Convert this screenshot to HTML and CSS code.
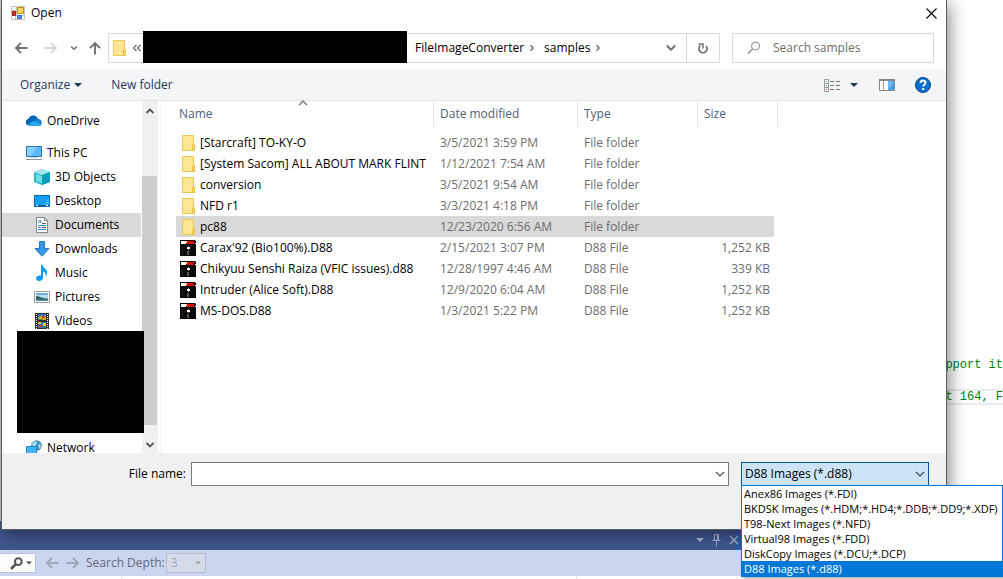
FILE: index.html
```html
<!DOCTYPE html>
<html lang="en">
<head>
<meta charset="utf-8">
<title>Open</title>
<link rel="stylesheet" href="styles.css">
</head>
<body>
<svg class="defs" aria-hidden="true">
  <symbol id="folder" viewBox="0 0 16 16">
    <path d="M2.500.5h11v9h1v6h-12z" fill="#ffe594" stroke="#eec64e"/>
    <path d="M12.500 15.500v-5.500h2v5.500z" fill="#ffe28a" stroke="#e9bd42"/>
  </symbol>
  <symbol id="disk" viewBox="0 0 16 16">
    <path d="M0 0h15l1 1v15H0z" fill="#0a0a0a"/>
    <path d="M1 1h5v3H1z" fill="#fff"/><path d="M6 1h1v2H6z" fill="#ffe040"/>
    <path d="M7 1h7v3H7z" fill="#e81000"/><path d="M9 2h1v1H9zM12 2h1v1h-1z" fill="#8c0800"/>
    <path d="M15 3h1v1h-1z" fill="#fff"/>
    <path d="M7 7h3v2H7z" fill="#fff"/><path d="M8 6h1v1H8zM8 9h1v1H8z" fill="#999"/>
    <path d="M7 11h2v4H7z" fill="#555"/><path d="M2.500 6v9" stroke="#242424" fill="none"/>
  </symbol>
  <symbol id="chev" viewBox="0 0 10 10"><path d="M1.500 3L5 6.500 8.500 3" fill="none" stroke="currentColor" stroke-width="1.800"/></symbol>
  <symbol id="thin" viewBox="0 0 10 10"><path d="M1 3l4 4 4-4" fill="none" stroke="currentColor" stroke-width="1.100"/></symbol>
  <symbol id="tri" viewBox="0 0 8 8"><path d="M0 2h8L4 6z" fill="currentColor"/></symbol>
  <symbol id="arrow" viewBox="0 0 14 12"><path d="M13.500 6H2M7 1L2 6l5 5" fill="none" stroke="currentColor" stroke-width="1.900"/></symbol>
</svg>

<main class="ide">
  <div class="editor" aria-hidden="true">
    <div class="code-line">pport it</div>
    <div class="code-line"></div>
    <div class="code-line current">t 164, F</div>
  </div>
  <section class="tool-window">
    <header class="tool-head">
      <button aria-label="Window position"><svg width="8" height="8"><use href="#tri"/></svg></button>
      <button aria-label="Auto hide"><svg width="9" height="12" viewBox="0 0 9 12"><path d="M2.500 6.500v-6h4v6M5.500 1v5M.5 6.500h8M4.500 7v5" fill="none" stroke="currentColor"/></svg></button>
      <button aria-label="Close panel"><svg width="10" height="10" viewBox="0 0 10 10"><path d="M1 1l8 8M9 1L1 9" stroke="currentColor" stroke-width="1.400"/></svg></button>
    </header>
    <div class="tool-bar">
      <button class="find" aria-label="Search"><svg width="13" height="13" viewBox="0 0 13 13"><circle cx="8.300" cy="4.700" r="3.400" fill="none" stroke="#555" stroke-width="2"/><path d="M6 7l-5 5" stroke="#555" stroke-width="2.600"/></svg><svg class="mini" viewBox="0 0 8 8"><use href="#tri"/></svg></button>
      <button class="step" aria-label="Previous"><svg width="14" height="12"><use href="#arrow"/></svg></button>
      <button class="step next" aria-label="Next"><svg width="14" height="12"><use href="#arrow"/></svg></button>
      <label for="depth">Search Depth:</label>
      <span class="depth-box"><select id="depth" disabled><option>3</option></select><svg class="mini" viewBox="0 0 8 8"><use href="#tri"/></svg></span>
    </div>
    <div class="results"><span></span><span></span></div>
  </section>
</main>

<section class="dialog" role="dialog" aria-labelledby="title">
  <header class="title-bar">
    <svg width="14" height="14" viewBox="0 0 14 14"><path d="M.5.5h13v13H.5z" fill="#fff" stroke="#c2c2c2"/><path d="M.5 4.500h5M4.500 10v4M5.500.5v9h8" stroke="#c2c2c2" fill="none"/><path d="M6.500 1.500h6v6h-6z" fill="#ffd65c" stroke="#c58d08"/><path d="M1.500 5.500h3v4h-3z" fill="#d93a2c" stroke="#a31212"/><path d="M6.500 9.500h4v3h-4z" fill="#5b8df0" stroke="#3668cb"/></svg>
    <h1 id="title">Open</h1>
    <button aria-label="Close"><svg width="11" height="11" viewBox="0 0 11 11"><path d="M.5.5l10 10M10.500.5l-10 10" stroke="#000" stroke-width="1.100"/></svg></button>
  </header>

  <nav class="address-row" aria-label="Location">
    <button class="back" aria-label="Back"><svg width="14" height="12"><use href="#arrow"/></svg></button>
    <button class="forward" aria-label="Forward"><svg width="14" height="12"><use href="#arrow"/></svg></button>
    <button class="recent" aria-label="Recent locations"><svg width="8" height="8"><use href="#chev"/></svg></button>
    <button class="up" aria-label="Up"><svg width="14" height="12"><use href="#arrow"/></svg></button>
    <div class="address">
      <svg class="place" width="16" height="16"><use href="#folder"/></svg>
      <svg class="more" width="8" height="8" viewBox="0 0 8 8"><path d="M3.500 1l-3 3 3 3M7.500 1l-3 3 3 3" fill="none" stroke="#666" stroke-width="1.200"/></svg>
      <span class="hidden-path"></span>
      <a href="#">FileImageConverter</a><svg class="sep" width="8" height="8"><use href="#chev"/></svg>
      <a href="#">samples</a><svg class="sep" width="8" height="8"><use href="#chev"/></svg>
      <button class="history" aria-label="Previous locations"><svg width="12" height="12"><use href="#chev"/></svg></button>
      <button class="refresh" aria-label="Refresh"><svg width="12" height="13" viewBox="0 0 12 13"><path d="M3.300 3.700A4 4 0 1 0 9 4" fill="none" stroke="#707070" stroke-width="1.800"/><path d="M1.500 2H6v4.500" fill="none" stroke="#707070" stroke-width="1.500"/></svg></button>
    </div>
    <div class="search">
      <svg width="14" height="14" viewBox="0 0 14 14"><circle cx="8.500" cy="5" r="4" fill="none" stroke="#85858d"/><path d="M5.500 8L1 12.500" stroke="#85858d" stroke-width="1.200"/></svg>
      <input type="search" placeholder="Search samples" aria-label="Search samples">
    </div>
  </nav>

  <div class="commands">
    <button>Organize <svg width="8" height="8"><use href="#tri"/></svg></button>
    <button>New folder</button>
    <button class="view" aria-label="Change your view"><svg width="17" height="13" viewBox="0 0 17 13"><path d="M.5.500h4v12h-4zM.5 4.500h4M.5 8.500h4" fill="#fff" stroke="#999"/><path d="M2 2h1v1H2z" fill="#3a78c8"/><path d="M2 6h1v1H2z" fill="#3a9ae8"/><path d="M2 10h1v1H2z" fill="#e02020"/><path d="M6 2.500h4M12 2.500h4M6 6.500h4M12 6.500h4M6 10.500h4M12 10.500h4" stroke="#777"/></svg><svg width="8" height="8"><use href="#tri"/></svg></button>
    <button class="preview" aria-label="Preview pane"><svg width="16" height="12" viewBox="0 0 16 12"><path d="M.5.500h15v11H.5z" fill="#fff" stroke="#888"/><path d="M0 0h16v2H0z" fill="#888"/><path d="M4.500 2v9" stroke="#999"/><path d="M9 2h6v9H9z" fill="#41a0ec"/><path d="M9 2h5v3l-5 6z" fill="#69b8f5"/></svg></button>
    <button class="help" aria-label="Help"><svg width="16" height="16" viewBox="0 0 16 16"><circle cx="8" cy="8" r="7.500" fill="#0570d0" stroke="#0a427c"/><path d="M5.500 6c0-3.300 5-3.200 5-.4 0 1.900-2.300 1.800-2.300 4" fill="none" stroke="#fff" stroke-width="1.900"/><path d="M7.200 11h2v2h-2z" fill="#fff"/></svg></button>
  </div>

  <div class="body">
    <aside class="tree">
      <ul>
        <li class="root spaced"><svg viewBox="0 0 16 16"><path d="M1 12a3.500 3.500 0 0 1 1.500-6.200A5 5 0 0 1 12 6l-4 5z" fill="#0364b8"/><path d="M8 8a4 4 0 0 1 5-2c2.500.5 3.500 3.500 2 6l-5-.5z" fill="#1683d8"/><path d="M1.500 12.500L6 8.500c4-1 5 1 9.500 3.200-.5 1-1 1.300-2 1.300H3z" fill="#28a8ea"/></svg>OneDrive</li>
        <li class="root"><svg viewBox="0 0 16 16"><path d="M.5 1.500h15v10H.5z" fill="#55b9fb" stroke="#3178a8"/><path d="M1 2h10L5 11H1z" fill="#86d0ff"/><path d="M5 12h6v1H5z" fill="#bbc7d4"/><path d="M0 14h16v1H0z" fill="#8293a4"/></svg>This PC</li>
        <li><svg viewBox="0 0 16 16"><path d="M0 3l8-3 8 3v10l-8 3-8-3z" fill="#2bbccf"/><path d="M0 3l8-3 8 3-8 3z" fill="#a6e7ea"/><path d="M8 6l8-3v10l-8 3z" fill="#0e9fb8"/><path d="M2 5l6 2v7l-6-2z" fill="#73dce2"/></svg>3D Objects</li>
        <li><svg viewBox="0 0 16 16"><path d="M.5 2.500h15v11H.5z" fill="#169ffa" stroke="#0869b5"/><path d="M8 13l7-8v8z" fill="#37b0ff"/><path d="M1 12h14v1H1z" fill="#075596"/><path d="M2 12h2v1H2zM12 12h2v1h-2z" fill="#fff"/></svg>Desktop</li>
        <li class="selected"><svg viewBox="0 0 16 16"><path d="M2.500.5h8l3 3v12h-11z" fill="#fff" stroke="#83888d"/><path d="M10.500.5v3h3" fill="none" stroke="#83888d"/><path d="M4 6l2-3 1 3M4 8.500h8M4 10.500h3M4 12.500h8" fill="none" stroke="#2789ca"/><path d="M8 6.500h4M8 10.500h4" stroke="#555"/></svg>Documents</li>
        <li><svg viewBox="0 0 16 16"><path d="M5.500.5h5v7h4.500L8 15.200 1 7.500h4.500z" fill="#3796e5" stroke="#2377bf"/></svg>Downloads</li>
        <li><svg viewBox="0 0 16 16"><path d="M7 0h2c0 3 4 4 4 7.500 0 1.500-.5 3-1.500 4 .5-3-.5-4.500-2.500-5V13c0 2-2 3-4 3S2 14.500 2 13.300C2 11 5 10 7 11z" fill="#089df5"/></svg>Music</li>
        <li><svg viewBox="0 0 16 16"><path d="M.5 2.500h15v11H.5z" fill="#fff" stroke="#9b9b9b"/><path d="M2 4h12v8H2z" fill="#b9ddf7"/><path d="M2 4h12v2H2z" fill="#6aa9e3"/><path d="M2 7c4 0 5 2.500 12 2.500V11H2z" fill="#326554"/><path d="M2 10.500h12V12H2z" fill="#4388a8"/></svg>Pictures</li>
        <li><svg viewBox="0 0 16 16"><path d="M1 0h14v16H1z" fill="#303030"/><path d="M2.500 1v15M13.500 1v15" stroke="#eee" stroke-dasharray="1 1"/><path d="M4 1h8v6H4z" fill="#3577c8"/><path d="M4 9h8v6H4z" fill="#3870d4"/><path d="M4 5l3-2 2 1 3-2v5H4z" fill="#e0ac24"/><path d="M8 3h3v2H8zM5 12h3v2H5z" fill="#d43924"/><path d="M4 9h3v2H4zM9 10h3v3H9z" fill="#e4c633"/><path d="M4 6h5v1H4zM8 14h4v1H8z" fill="#39873c"/></svg>Videos</li>
        <li class="hidden-items"></li>
        <li class="root"><svg viewBox="0 0 16 16"><circle cx="10.500" cy="5.500" r="5.300" fill="#3c8eb8"/><path d="M6 4c2-4 5-3 5-1S8 6 8 8zM12 4c2 0 3 1 3 3l-2 2z" fill="#a9dcec"/><path d="M.5 6.500h10v8H.5z" fill="#41b5fa" stroke="#2883bd"/></svg>Network</li>
      </ul>
      <div class="scroll"><svg width="10" height="10" class="flip"><use href="#chev"/></svg><span class="thumb"></span><svg width="10" height="10"><use href="#chev"/></svg></div>
    </aside>
    <div class="files">
      <table>
        <colgroup><col class="c-name"><col class="c-date"><col class="c-type"><col class="c-size"></colgroup>
        <thead><tr><th>Name<svg class="sort" width="10" height="10"><use href="#thin"/></svg></th><th>Date modified</th><th>Type</th><th>Size</th></tr></thead>
        <tbody>
          <tr><td><svg><use href="#folder"/></svg>[Starcraft] TO-KY-O</td><td>3/5/2021 3:59 PM</td><td>File folder</td><td></td></tr>
          <tr><td><svg><use href="#folder"/></svg>[System Sacom] ALL ABOUT MARK FLINT</td><td>1/12/2021 7:54 AM</td><td>File folder</td><td></td></tr>
          <tr><td><svg><use href="#folder"/></svg>conversion</td><td>3/5/2021 9:54 AM</td><td>File folder</td><td></td></tr>
          <tr><td><svg><use href="#folder"/></svg>NFD r1</td><td>3/3/2021 4:18 PM</td><td>File folder</td><td></td></tr>
          <tr class="selected"><td><svg><use href="#folder"/></svg>pc88</td><td>12/23/2020 6:56 AM</td><td>File folder</td><td></td></tr>
          <tr><td><svg><use href="#disk"/></svg>Carax'92 (Bio100%).D88</td><td>2/15/2021 3:07 PM</td><td>D88 File</td><td>1,252 KB</td></tr>
          <tr><td><svg><use href="#disk"/></svg>Chikyuu Senshi Raiza (VFIC issues).d88</td><td>12/28/1997 4:46 AM</td><td>D88 File</td><td>339 KB</td></tr>
          <tr><td><svg><use href="#disk"/></svg>Intruder (Alice Soft).D88</td><td>12/9/2020 6:04 AM</td><td>D88 File</td><td>1,252 KB</td></tr>
          <tr><td><svg><use href="#disk"/></svg>MS-DOS.D88</td><td>1/3/2021 5:22 PM</td><td>D88 File</td><td>1,252 KB</td></tr>
        </tbody>
      </table>
    </div>
  </div>

  <footer class="form-row">
    <label for="filename">File name:</label>
    <span class="combo name"><input id="filename" type="text"><svg width="10" height="10"><use href="#thin"/></svg></span>
    <span class="combo type">
      <select aria-label="File type"><option>D88 Images (*.d88)</option></select><svg width="10" height="10"><use href="#thin"/></svg>
      <ul class="menu" role="listbox" aria-label="File types">
        <li role="option">Anex86 Images (*.FDI)</li>
        <li role="option">BKDSK Images (*.HDM;*.HD4;*.DDB;*.DD9;*.XDF)</li>
        <li role="option">T98-Next Images (*.NFD)</li>
        <li role="option">Virtual98 Images (*.FDD)</li>
        <li role="option">DiskCopy Images (*.DCU;*.DCP)</li>
        <li role="option" aria-selected="true">D88 Images (*.d88)</li>
      </ul>
    </span>
  </footer>
</section>
</body>
</html>
```
FILE: styles.css
```css
* { box-sizing: border-box; }
body { margin: 0; height: 100vh; overflow: hidden; position: relative; background: #fff; font: 12px/16px "Open Sans", "Noto Sans", sans-serif; color: #000; }
button, input, select { font: inherit; color: inherit; margin: 0; padding: 0; border: 0; background: none; border-radius: 0; }
button { display: flex; align-items: center; justify-content: center; }
select { appearance: none; opacity: 1; }
ul { list-style: none; margin: 0; padding: 0; }
a { color: inherit; text-decoration: none; }
svg { flex: none; display: block; }
.defs { position: absolute; width: 0; height: 0; }

/* editor behind the dialog */
.ide { height: 100%; display: flex; flex-direction: column; }
.editor { flex: 1; display: flex; flex-direction: column; padding-top: 357px; border-left: 1px solid #d0d0d6; }
.code-line { height: 16px; text-align: right; white-space: pre; font: 12px/16px "Liberation Mono", monospace; color: #008000; }
.code-line.current { border: solid #eaeaf2; border-width: 2px 0; line-height: 12px; }
.tool-head { height: 29px; padding: 8px 264px 0 0; display: flex; align-items: center; justify-content: flex-end; gap: 8px; background: #40568d; color: #c3cbe2; }
.tool-head svg { opacity: .8; }
.tool-bar { height: 26px; display: flex; align-items: center; background: #ccd5f0; color: #66697a; }
.find { width: 36px; height: 20px; padding-left: 6px; gap: 3px; background: #fcfcfd; border: 1px solid #b8c0da; border-left: 0; color: #555; }
.mini { width: 6px; height: 6px; }
.step { margin-left: 9px; color: #a0a6b8; }
.next { margin-left: 7px; transform: scaleX(-1); }
.tool-bar label { margin: 0 1px 0 6px; }
.depth-box { display: flex; align-items: center; width: 40px; height: 20px; padding: 0 4px; background: #d5dbe8; border: 1px solid #b7bdcd; color: #a0a4b0; }
.depth-box select { flex: 1; color: #a0a4b0; }
.results { height: 3px; display: flex; background: #fff; }
.results span { width: 122px; border-right: 1px solid #e4e4ee; }
.results span + span { width: 455px; }

/* dialog */
.dialog { position: absolute; inset: 0 56px 49px 1px; display: flex; flex-direction: column; background: #fff; border: 1px solid #5b5d62; border-top: 0; box-shadow: 3px 4px 16px rgba(0, 0, 0, .45); }
.title-bar { height: 26px; padding: 0 9px; display: flex; align-items: center; gap: 6px; }
.title-bar h1 { margin: 0; flex: 1; font: inherit; }
.address-row { height: 44px; padding: 0 12px; display: flex; align-items: center; color: #707070; }
.forward { margin-left: 16px; transform: scaleX(-1); color: #d6d6d6; }
.recent { margin-left: 12px; }
.up { margin-left: 10px; transform: rotate(90deg); }
.address { position: relative; flex: 1; height: 30px; margin-left: 6px; display: flex; align-items: center; border: 1px solid #d9d9d9; color: #000; }
.place { margin-left: 2px; }
.more { margin-left: 6px; }
.hidden-path { align-self: stretch; width: 264px; margin: -3px 8px -1px 2px; background: #000; }
.sep { margin: 0 8px 0 4px; color: #707070; transform: rotate(-90deg); }
.history { margin-left: auto; margin-right: 9px; color: #777; }
.refresh { align-self: stretch; width: 33px; border-left: 1px solid #d9d9d9; }
.search { width: 202px; height: 30px; margin-left: 12px; padding-left: 14px; display: flex; align-items: center; gap: 12px; border: 1px solid #d9d9d9; }
.search input { flex: 1; min-width: 0; outline: 0; }
.search input::placeholder { color: #6d6d6d; opacity: 1; }
.commands { height: 31px; padding: 0 15px 0 18px; display: flex; align-items: center; background: #f4f5f7; border-bottom: 1px solid #e5e6e8; color: #1e395b; }
.commands button { gap: 4px; margin-right: 29px; }
.commands .view { margin-left: auto; margin-right: 21px; gap: 9px; }
.commands .preview { margin-right: 20px; }
.commands .help { margin-right: 0; }
.body { flex: 1; min-height: 0; display: flex; }
.tree { width: 159px; display: flex; gap: 1px; overflow: hidden; border-right: 1px solid #f3f3f3; }
.tree ul { flex: 1; padding-top: 8px; }
.tree li { height: 24px; padding-left: 32px; display: flex; align-items: center; gap: 5px; }
.tree li svg { width: 16px; height: 16px; }
.tree .root { padding-left: 24px; }
.tree .spaced { margin-bottom: 8px; }
.tree .selected { background: #d9d9d9; }
.tree .hidden-items { position: relative; height: 102px; margin: -2px -3px 3px 15px; background: #000; }
.scroll { width: 16px; margin-right: 2px; padding: 5px 0 3px; display: flex; flex-direction: column; align-items: center; background: #f0f0f0; color: #555; }
.thumb { align-self: stretch; margin: 60px 1px auto 0; height: 249px; background: #cdcdcd; }
.flip { transform: scaleY(-1); }
.files { flex: 1; padding-left: 15px; }
table { width: 602px; table-layout: fixed; border-spacing: 0; }
.c-name { width: 258px; }
.c-date { width: 144px; }
.c-type { width: 120px; }
.c-size { width: 80px; }
th { position: relative; height: 26px; padding: 0 3px; font-weight: normal; text-align: left; color: #4c607a; border-right: 1px solid #e5e5e5; }
th + th { padding-left: 6px; }
.sort { position: absolute; left: 122px; top: -3px; transform: scaleY(-1); color: #666; }
tbody::before { content: ""; display: block; height: 5px; }
td { height: 21px; padding: 0 0 0 6px; white-space: nowrap; color: #6d6d6d; }
td:first-child { display: flex; align-items: center; gap: 4px; padding-left: 4px; color: #000; }
td svg { width: 16px; height: 16px; }
td:last-child { text-align: right; padding-right: 4px; border-right: 4px solid transparent; background-clip: padding-box; }
tr.selected td { background-color: #d9d9d9; }
.form-row { height: 76px; padding: 9px 17px 0; display: flex; align-items: flex-start; background: #f0f0f0; }
.form-row label { width: 167px; padding-top: 4px; text-align: right; }
.combo { position: relative; height: 24px; display: flex; align-items: center; padding-right: 3px; background: #fff; border: 1px solid #7a7a7a; color: #444; }
.name { flex: 1; margin: 0 12px 0 5px; }
.combo input, .combo select { flex: 1; min-width: 0; height: 100%; padding: 0 3px; outline: 0; color: #000; }
.type { width: 188px; background: #cce4f7; border-color: #0058a0; }
.menu { position: absolute; z-index: 2; left: -1px; top: 22px; width: 262px; background: #fff; border: 1px solid #0078d7; color: #000; font-size: 11px; box-shadow: 2px 2px 3px rgba(0, 0, 0, .3); }
.menu li { height: 15px; padding-left: 2px; line-height: 15px; white-space: nowrap; }
.menu [aria-selected="true"] { background: #0078d7; color: #fff; }
```
